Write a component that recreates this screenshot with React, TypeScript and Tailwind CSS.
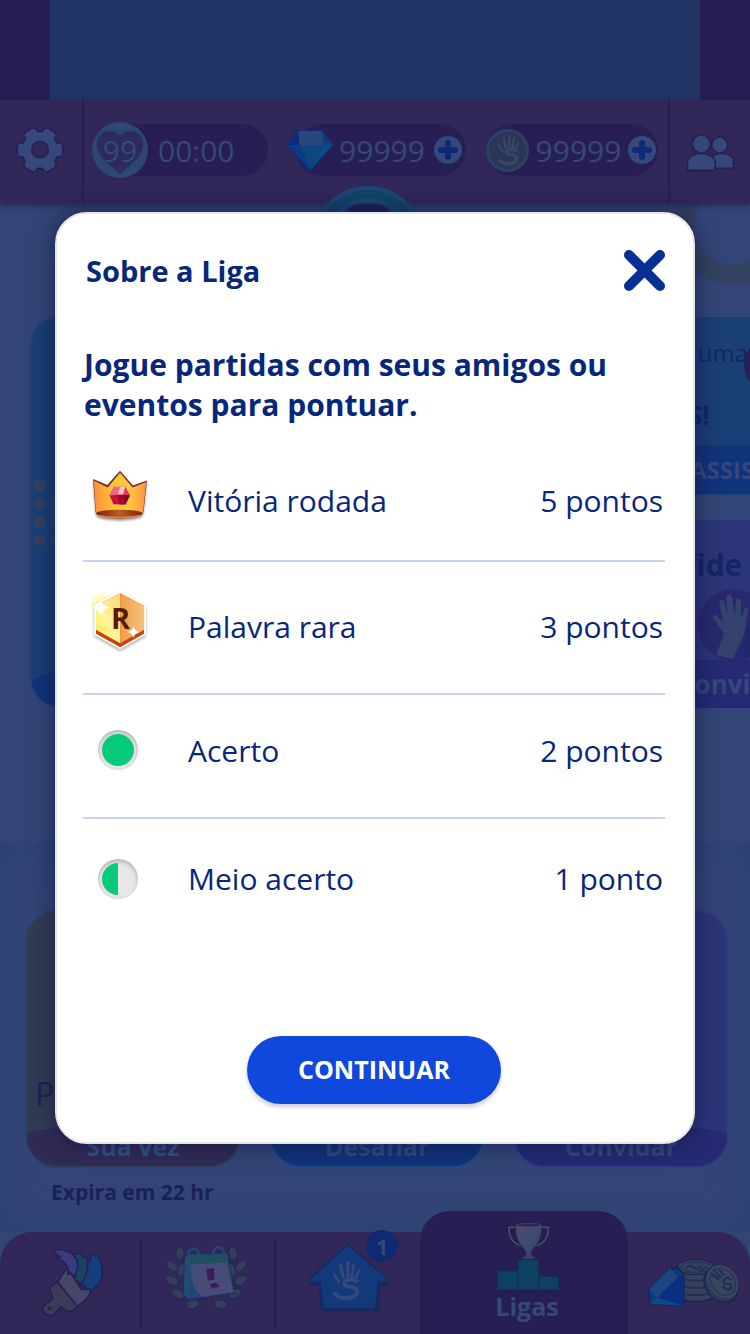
import type { ReactNode } from "react";

const HandMark = ({ className }: { className?: string }) => (
  <svg viewBox="0 0 90 126" className={className} fill="none" stroke="currentColor" strokeLinecap="round">
    <path d="M7 42 L24 66" strokeWidth="9" />
    <path d="M28 11 L36 52" strokeWidth="10" />
    <path d="M51 5 L51 48" strokeWidth="10" />
    <path d="M70 11 L63 49" strokeWidth="9" />
    <path d="M87 29 L74 55" strokeWidth="8" />
    <path d="M79 64 C61 52 36 60 40 74 C44 84 80 78 80 95 C80 117 34 127 10 103" strokeWidth="13" />
  </svg>
);

const GearShape = () => (
  <>
    <circle cx="120" cy="181" r="53" />
    <rect x="54" y="162" width="132" height="38" rx="10" />
    <rect x="54" y="162" width="132" height="38" rx="10" transform="rotate(60 120 181)" />
    <rect x="54" y="162" width="132" height="38" rx="10" transform="rotate(120 120 181)" />
  </>
);

const GearIcon = () => (
  <svg viewBox="45 106 150 150" className="size-[50px]">
    <g fill="#271f54" stroke="#271f54" strokeWidth="10">
      <GearShape />
    </g>
    <g fill="#34487c">
      <GearShape />
    </g>
    <circle cx="120" cy="180" r="24" fill="#312759" stroke="#271f54" strokeWidth="6" />
  </svg>
);

const FriendsIcon = () => (
  <svg viewBox="933 126 147 117" className="h-[39px] w-[49px]" fill="#34487c" stroke="#271f54" strokeWidth="5">
    <circle cx="1034" cy="162" r="24" />
    <path d="M1005 232 V210 C1005 180 1076 180 1076 210 V224 Q1076 232 1068 232 Z" />
    <circle cx="979" cy="159" r="27" />
    <path d="M937 238 V216 C937 178 1021 178 1021 216 V230 Q1021 238 1013 238 Z" />
  </svg>
);

const DiamondIcon = () => (
  <svg viewBox="860 116 144 130" className="h-[43px] w-[48px] shrink-0">
    <path d="M892 120 H970 L1002 164 L932 245 L860 164 Z" fill="#0b2d78" />
    <path d="M896 122 H968 L975 164 H900 Z" fill="#28467f" />
    <path d="M968 122 L1000 164 H975 Z" fill="#0d3f80" />
    <path d="M900 164 H975 L932 240 Z" fill="#10467f" />
    <path d="M975 164 H1000 L932 242 Z" fill="#0b4d84" />
    <path d="M862 164 H900 L932 240 Z" fill="#0a3b86" />
  </svg>
);

const PlusButton = ({ label }: { label: string }) => (
  <button type="button" aria-label={label} className="size-7 shrink-0 rounded-full bg-[#34487c]">
    <svg viewBox="0 0 28 28" stroke="#0d2a78" strokeWidth="6" strokeLinecap="round">
      <path d="M14 7 V21 M7 14 H21" />
    </svg>
  </button>
);

const HeartBadge = () => (
  <div className="relative flex size-14 shrink-0 items-center justify-center rounded-full bg-[#2e4675]">
    <svg viewBox="0 0 56 56" className="absolute inset-0">
      <path
        d="M28 14 C23 7 5 6 5 23 C6 38 20 43 28 52 C36 43 50 38 51 23 C51 6 33 7 28 14 Z"
        fill="#2d2a5c"
        stroke="#263766"
        strokeWidth="1"
      />
    </svg>
    <span className="relative">99</span>
  </div>
);

const CoinIcon = () => (
  <div className="flex size-[43px] shrink-0 items-center justify-center rounded-full border-[3px] border-[#2d4161] bg-[#2b3558]">
    <HandMark className="h-[31px] w-6 text-[#384765]" />
  </div>
);

const TopBar = () => (
  <header className="relative z-10 flex h-[104px] bg-[#312759] text-[#34487c] shadow-[0_2px_6px_rgba(20,24,70,0.5)]">
    <button type="button" aria-label="Configurações" className="flex w-[84px] items-center justify-center border-r-2 border-[#271f54] pr-0.5 pb-1">
      <GearIcon />
    </button>
    <div className="flex flex-1 items-center justify-between pr-2.5 pb-1 pl-2 text-[30px]">
      <div className="flex h-[52px] w-44 items-center gap-2.5 rounded-full bg-[#271f54]">
        <HeartBadge />
        <span>00:00</span>
      </div>
      <div className="ml-2 flex h-[52px] w-[170px] items-center justify-between rounded-full bg-[#271f54] pr-1">
        <div className="-mr-1 -ml-2.5">
          <DiamondIcon />
        </div>
        <span>99999</span>
        <PlusButton label="Comprar diamantes" />
      </div>
      <div className="flex h-[52px] w-[172px] items-center justify-between rounded-full bg-[#271f54] pr-0.5">
        <CoinIcon />
        <span>99999</span>
        <PlusButton label="Comprar moedas" />
      </div>
    </div>
    <button type="button" aria-label="Amigos" className="flex w-[82px] items-center justify-center border-l-2 border-[#271f54]">
      <FriendsIcon />
    </button>
  </header>
);

const Dots = () => (
  <div className="grid w-[30px] grid-cols-2 gap-1.5">
    {[0, 1, 2, 3, 4, 5, 6, 7].map((n) => (
      <span key={n} className={n === 1 ? "invisible size-3" : "size-3 rounded-full bg-[#33415f]"} />
    ))}
  </div>
);

const HandPhoto = () => (
  <svg viewBox="0 0 72 72" className="size-[72px] shrink-0 rounded-full bg-[#27286f]">
    <path d="M46 72 L48 40 L60 18 L72 20 V66 Z" fill="#1f2a68" />
    <path
      d="M18 66 L26 45 L15 29 Q14 25 18 26 L25 33 L21 13 Q23 8 26 13 L30 27 L28 8 Q31 3 34 8 L37 27 L38 11 Q42 7 43 12 L43 29 L47 19 Q51 17 50 22 L46 46 L35 70 Z"
      fill="#34436e"
    />
  </svg>
);

const LeagueSection = () => (
  <section className="relative h-[638px] bg-[#334577]">
    <div className="absolute -top-[36px] -right-[40px] size-[116px] rounded-full border-[20px] border-[#334260]" />
    <div className="absolute -top-[18px] left-[312px] z-10 size-28 rounded-full border-4 border-[#1f457b] bg-[#104665] p-2">
      <div className="flex size-full justify-center rounded-full border-4 border-[#1f457b] bg-[#1f3c6d]">
        <div className="mt-0.5 h-8 w-12 rounded-t-2xl bg-[#1e2256]" />
      </div>
    </div>
    <div className="flex justify-between gap-6 overflow-hidden pt-[110px] pl-[29px]">
      <article className="flex h-[395px] w-[320px] flex-col overflow-hidden rounded-[32px] border-2 border-[#28457a] bg-[#193f76]">
        <div className="flex-1 pt-[164px] pl-[3px]">
          <Dots />
        </div>
        <div className="h-[46px] rounded-t-[50%] bg-[#10337a]" />
      </article>
      <div className="-mr-24 flex w-[300px] flex-col gap-6 pt-[3px] text-[#142666]">
        <article className="h-[179px] border-b-2 border-[#1f457b] bg-[#193f76]">
          <div className="flex h-32 items-start pt-5 pl-[142px]">
            <div className="flex w-[60px] flex-col gap-7">
              <span className="self-end text-2xl">uma</span>
              <span className="text-[26px] leading-9 font-bold">S!</span>
            </div>
            <span className="-ml-1 size-14 rounded-full bg-[#2b1f57]" />
          </div>
          <button type="button" className="h-[49px] w-full bg-[#10337a] pl-36 text-left text-2xl font-bold text-[#34487c]">
            ASSISTIR
          </button>
        </article>
        <article className="flex h-[190px] flex-col border-b-2 border-[#34408a] bg-[#2c3579]">
          <div className="flex h-[140px] flex-col overflow-hidden pt-[22px] pl-[76px]">
            <span className="text-[30px] font-bold">Convide</span>
            <div className="pt-0.5 pl-[76px]">
              <HandPhoto />
            </div>
          </div>
          <button type="button" className="h-12 w-full bg-[#252a73] pl-[132px] text-left text-[26px] font-bold text-[#34487c]">
            Convidar
          </button>
        </article>
      </div>
    </div>
  </section>
);

type MatchCardProps = { label: string; className: string; footer: string; children?: ReactNode };

const MatchCard = ({ label, className, footer, children }: MatchCardProps) => (
  <article className={`flex h-[258px] w-[216px] flex-col justify-end overflow-hidden rounded-[32px] border-2 ${className}`}>
    {children}
    <button type="button" className={`h-10 w-full rounded-t-[50%_8px] text-[25px] leading-8 font-bold ${footer}`}>
      {label}
    </button>
  </article>
);

const MatchSection = () => (
  <section className="h-[390px] bg-[#334577] pt-[68px] pr-[21px] pl-[25px] shadow-[inset_0_0_36px_#2c4074]">
    <div className="flex justify-between">
      <MatchCard label="Sua vez" className="border-[#30405f] bg-[#323b53]" footer="bg-[#302b55] text-[#34508a]">
        <span className="pb-2 pl-2 text-[32px] text-[#1a2259]">P</span>
      </MatchCard>
      <MatchCard label="Desafiar" className="border-[#1d4d85] bg-[#193f76]" footer="bg-[#10337a] text-[#34487c]" />
      <MatchCard label="Convidar" className="border-[#323c82] bg-[#2c3579]" footer="bg-[#252a73] text-[#34487c]" />
    </div>
    <p className="pt-2 pl-[26px] text-[21px] leading-8 font-bold text-[#1b2158]">Expira em 22 hr</p>
  </section>
);

const BrushIcon = () => (
  <svg viewBox="125 195 195 215" className="h-[72px] w-[65px]" stroke="#271f54" strokeWidth="5" strokeLinejoin="round">
    <path d="M276 238 Q272 218 288 217 Q306 218 310 250 Q318 284 302 304 L277 329 L248 306 Q266 275 268 238 Z" fill="#143f7e" />
    <path d="M220 214 Q230 222 236 214 Q248 210 254 224 Q268 222 268 248 Q266 285 246 306 L222 282 Q242 258 234 238 Q230 225 220 214 Z" fill="#19445f" />
    <path d="M166 204 Q192 200 214 210 Q240 222 238 256 L230 284 L210 268 Q210 246 188 236 Q174 230 172 224 L188 226 Q166 212 166 204 Z" fill="#3a3a7e" />
    <path d="M202 262 L212 268 L208 276 L218 274 L250 322 L276 322 Q280 334 264 350 L236 374 L178 300 Z" fill="#464668" />
    <path d="M178 300 L238 374 Q218 392 204 386 L188 374 L166 398 Q146 406 134 386 Q130 372 142 366 L164 350 L154 324 Q154 308 178 300 Z" fill="#3b3b56" />
    <circle cx="153" cy="379" r="4" fill="#271f54" strokeWidth="2" />
  </svg>
);

const leaves = [
  [540, 218, 5],
  [516, 256, -45],
  [516, 300, -60],
  [534, 340, -60],
  [578, 372, -100],
  [700, 218, -5],
  [724, 256, 45],
  [724, 300, 60],
  [706, 340, 60],
  [662, 372, 100],
  [546, 268, 20],
  [694, 268, -20],
];

const CalendarIcon = () => (
  <svg viewBox="495 190 250 205" className="h-[68px] w-[83px]" strokeLinejoin="round">
    <path d="M540 220 C515 310 530 350 605 380 M700 220 C725 310 710 350 635 380" fill="none" stroke="#23305a" strokeWidth="6" />
    {leaves.map(([x, y, angle]) => (
      <ellipse
        key={`${x}-${y}`}
        cx={x}
        cy={y}
        rx="13"
        ry="21"
        fill="#363d5a"
        stroke="#232a5a"
        strokeWidth="4"
        transform={`rotate(${angle} ${x} ${y})`}
      />
    ))}
    <path d="M553 236 Q555 222 568 222 L684 220 L704 338 L562 356 L550 340 Z" fill="#244b70" stroke="#232a5a" strokeWidth="3" />
    <path d="M568 222 L684 220 V246 L570 250 Z" fill="#20505f" />
    <path d="M572 252 L682 246 Q686 300 704 334 L612 350 Q572 332 572 252 Z" fill="#464b78" />
    <path d="M572 300 Q580 336 612 350 L562 356 Z" fill="#204578" />
    <path d="M570 232 A16 16 0 1 1 588 234 M644 226 A16 16 0 1 1 664 230" fill="none" stroke="#23477c" strokeWidth="7" />
    <path d="M619 265 L643 263 L644 298 L624 300 Z M630 312 L648 306 L660 318 L636 324 Z" fill="#3a1c51" />
  </svg>
);

const HouseIcon = () => (
  <div className="relative">
    <svg viewBox="920 182 246 216" className="h-[72px] w-[82px]" strokeLinejoin="round">
      <path d="M1042 194 L1158 294 V308 H1136 L1130 384 H966 L960 308 H930 V296 Z" fill="#17295d" stroke="#17295d" strokeWidth="12" />
      <path d="M1042 192 L1158 292 Q1158 300 1150 300 H1132 L1124 380 H970 L962 300 H932 V294 Z" fill="#123a7b" />
    </svg>
    <HandMark className="absolute top-[19px] left-6 h-10 w-[30px] text-[#34487c]" />
    <span className="absolute -top-3 left-[59px] flex size-8 items-center justify-center rounded-full bg-[#0f2a72] text-[22px] font-bold text-[#34487c]">
      1
    </span>
  </div>
);

const TrophyIcon = () => (
  <svg viewBox="362 125 195 212" className="h-[71px] w-[65px]">
    <defs>
      <linearGradient id="cup" x1="0" x2="1" y1="0" y2="1">
        <stop offset="0" stopColor="#504a68" />
        <stop offset="0.5" stopColor="#3c4c72" />
        <stop offset="1" stopColor="#3c3660" />
      </linearGradient>
    </defs>
    <path d="M426 143 H404 Q403 188 440 198 M500 143 H522 Q523 188 486 198" fill="none" stroke="#1e1a4a" strokeWidth="11" />
    <path d="M426 143 H404 Q403 188 440 198 M500 143 H522 Q523 188 486 198" fill="none" stroke="#4a4566" strokeWidth="6" />
    <path d="M423 136 H503 Q504 188 476 209 L471 224 L486 239 H440 L456 224 L450 209 Q422 188 423 136 Z" fill="url(#cup)" stroke="#1e1a4a" strokeWidth="2" />
    <ellipse cx="463" cy="137" rx="39" ry="5" fill="#30224f" stroke="#46506e" strokeWidth="2" />
    <path d="M369 274 H431 V240 H493 V291 H553 V331 H369 Z" fill="#0e405f" stroke="#142a59" strokeWidth="2" />
    <path d="M431 274 V331 M493 291 V331" stroke="#0d3057" strokeWidth="3" />
  </svg>
);

const GemsIcon = () => (
  <svg viewBox="815 230 290 150" className="h-[50px] w-[97px]" strokeLinejoin="round">
    <path d="M908 258 V342 A56 22 0 0 0 1020 342 V258 Z" fill="#37405c" stroke="#1d2554" strokeWidth="5" />
    <path d="M910 286 A56 20 0 0 0 1018 286 M910 308 A56 20 0 0 0 1018 308 M910 330 A56 20 0 0 0 1018 330" fill="none" stroke="#262b50" strokeWidth="5" />
    <ellipse cx="964" cy="260" rx="55" ry="23" fill="#35425e" stroke="#1d2554" strokeWidth="4" />
    <ellipse cx="964" cy="260" rx="43" ry="16" fill="none" stroke="#28345a" strokeWidth="4" />
    <path d="M934 264 Q946 250 958 262 Q968 272 978 256 M980 266 L998 260 M974 270 L990 272" fill="none" stroke="#1f2b56" strokeWidth="5" />
    <ellipse cx="1040" cy="312" rx="47" ry="58" transform="rotate(-38 1040 312)" fill="#2d3657" stroke="#1d2554" strokeWidth="5" />
    <ellipse cx="1045" cy="304" rx="43" ry="54" transform="rotate(-38 1045 304)" fill="#37455f" />
    <ellipse cx="1045" cy="304" rx="34" ry="44" transform="rotate(-38 1045 304)" fill="none" stroke="#26345a" strokeWidth="4" />
    <path
      d="M1012 282 L1034 298 M1020 272 L1040 292 M1034 266 L1048 286 M1072 298 Q1056 286 1048 300 Q1044 312 1058 310 Q1074 310 1070 324 Q1058 334 1044 318"
      fill="none"
      stroke="#202c57"
      strokeWidth="6"
    />
    <path d="M886 264 L912 264 L928 284 V376 L826 370 L822 328 Z" fill="#0d397e" stroke="#192555" strokeWidth="5" />
    <path d="M886 264 L912 290 L848 352 L822 328 Z" fill="#1d4580" />
    <path d="M912 290 L928 284 V376 L848 352 Z" fill="#092f83" />
    <path d="M848 352 L928 376 L826 370 Z" fill="#0d4a87" />
  </svg>
);

const BottomNav = () => (
  <nav className="relative grid h-[102px] grid-cols-[142fr_134fr_144fr_208fr_122fr] rounded-t-[32px] bg-[#312759] text-[#34487c]">
    <button type="button" aria-label="Personalizar" className="my-1.5 flex items-center justify-center border-r-2 border-[#271f54] pl-1">
      <BrushIcon />
    </button>
    <button type="button" aria-label="Eventos" className="my-1.5 flex items-start justify-center border-r-2 border-[#271f54] pt-1.5 pr-1">
      <CalendarIcon />
    </button>
    <button type="button" aria-label="Início" className="flex items-start justify-center pt-2.5">
      <HouseIcon />
    </button>
    <button type="button" className="-mt-[21px] flex flex-col items-center rounded-t-[30px] bg-[#271f54] pt-2.5 pl-1.5 text-[25px] leading-7 font-bold">
      <TrophyIcon />
      Ligas
    </button>
    <button type="button" aria-label="Loja" className="flex justify-center pt-[25px] pl-2.5">
      <GemsIcon />
    </button>
  </nav>
);

const CrownIcon = () => (
  <svg viewBox="93 50 180 202" className="h-[67px] w-[60px] drop-shadow-[0_2px_1px_rgba(0,0,0,0.4)]" strokeLinejoin="round">
    <defs>
      <linearGradient id="crown" x1="0" x2="1">
        <stop offset="0" stopColor="#ff8a3c" />
        <stop offset="0.22" stopColor="#fdae38" />
        <stop offset="0.4" stopColor="#fdc43a" />
        <stop offset="0.7" stopColor="#fdc73b" />
        <stop offset="1" stopColor="#ff8f42" />
      </linearGradient>
      <linearGradient id="crownBase" x1="0" x2="1">
        <stop offset="0" stopColor="#6d2713" />
        <stop offset="0.5" stopColor="#b85c22" />
        <stop offset="1" stopColor="#74290f" />
      </linearGradient>
    </defs>
    <path d="M99 86 L142 104 L180 61 L219 106 L261 91 L251 184 Q248 204 178 205 Q110 203 106 184 Z" fill="#6e2d22" />
    <path d="M101 91 L143 112 L180 67 L218 112 L259 95 L250 184 Q246 203 178 203 Q112 202 107 184 Z" fill="url(#crown)" />
    <ellipse cx="178" cy="190" rx="70" ry="11" fill="url(#crownBase)" />
    <path d="M110 194 Q178 206 246 194 Q236 204 178 205 Q120 204 110 194 Z" fill="#f2793a" />
    <path d="M147 136 L161 109 H196 L211 136 L197 164 H160 Z" fill="#c9103c" stroke="#ffd56a" strokeWidth="2" />
    <path d="M161 110 H180 L172 134 L148 136 Z" fill="#f0667e" />
    <path d="M180 110 H196 L190 134 L172 134 Z" fill="#ffc2c8" />
    <path d="M196 110 L210 136 L190 134 Z" fill="#e83a58" />
    <path d="M172 134 H190 L197 163 H178 Z" fill="#a30a32" />
    <path d="M190 134 L210 136 L197 163 Z" fill="#840726" />
  </svg>
);

const RareWordIcon = () => (
  <svg viewBox="92 420 190 225" className="h-[75px] w-[63px]" strokeLinejoin="round">
    <defs>
      <linearGradient id="tileLeft" x1="0" x2="1" y1="1" y2="0">
        <stop offset="0" stopColor="#ffe94f" />
        <stop offset="0.45" stopColor="#fff59a" />
        <stop offset="1" stopColor="#fbd676" />
      </linearGradient>
      <linearGradient id="tileRight" x1="0" x2="1">
        <stop offset="0" stopColor="#eea04a" />
        <stop offset="1" stopColor="#f6c277" />
      </linearGradient>
      <radialGradient id="glow">
        <stop offset="0" stopColor="#ffef7a" />
        <stop offset="1" stopColor="#ffef7a" stopOpacity="0" />
      </radialGradient>
    </defs>
    <circle cx="124" cy="466" r="42" fill="url(#glow)" />
    <path
      d="M180 432 L252 470 V554 L180 595 L107 554 V470 Z"
      fill="#c8440f"
      stroke="#ffffff"
      strokeWidth="11"
      className="drop-shadow-[0_5px_5px_rgba(0,0,0,0.35)]"
    />
    <path d="M180 432 L252 470 V554 L180 595 L107 554 V470 Z" fill="#c8440f" />
    <path d="M180 432 V583 L107 542 V470 Z" fill="url(#tileLeft)" />
    <path d="M180 432 L252 470 V542 L180 583 Z" fill="url(#tileRight)" />
    <text x="181" y="540" textAnchor="middle" fontSize="87" fontWeight="700" fill="#5a1a05">
      R
    </text>
    <path d="M121 447 Q125 470 147 475 Q125 480 121 503 Q117 480 95 475 Q117 470 121 447 Z" fill="#ffffff" />
    <path d="M220 530 Q223 546 238 549 Q223 552 220 567 Q217 552 203 549 Q217 546 220 530 Z" fill="#ffffff" />
  </svg>
);

const Peg = ({ half }: { half?: boolean }) => (
  <div className="ml-[7px] size-10 rounded-full bg-[#e7e7e7] p-1 shadow-[inset_0_2px_4px_rgba(0,0,0,0.25)]">
    <div className={half ? "h-8 w-4 rounded-l-full bg-[#07ca7b]" : "size-8 rounded-full bg-[#07ca7b]"} />
  </div>
);

const scores = [
  { name: "Vitória rodada", points: "5 pontos", icon: <CrownIcon />, row: "h-[120px] border-b-2" },
  { name: "Palavra rara", points: "3 pontos", icon: <RareWordIcon />, row: "h-[133px] border-b-2 *:pb-0.5" },
  { name: "Acerto", points: "2 pontos", icon: <Peg />, row: "h-[124px] border-b-2 *:pb-3" },
  { name: "Meio acerto", points: "1 ponto", icon: <Peg half />, row: "h-[122px] *:pb-0.5" },
];

const LeagueDialog = () => (
  <div className="absolute inset-0 z-20 flex items-start px-[55px] pt-[212px]">
    <div
      role="dialog"
      aria-labelledby="dialog-title"
      className="flex w-full flex-col rounded-[32px] border-2 border-[#e6e6e6] bg-white pt-9 pr-7 pb-[38px] pl-[26px] text-[#06277a] shadow-[0_0_24px_rgba(10,16,48,0.6)]"
    >
      <div className="flex items-center justify-between pl-[3px]">
        <h2 id="dialog-title" className="text-[29px] leading-10 font-bold">
          Sobre a Liga
        </h2>
        <button type="button" aria-label="Fechar">
          <svg viewBox="0 0 41 41" className="size-[41px]" stroke="#062f96" strokeWidth="10" strokeLinecap="round">
            <path d="M5 5 L36 36 M36 5 L5 36" />
          </svg>
        </button>
      </div>
      <p className="mt-[54px] pl-px text-[30px] leading-10 font-bold">
        Jogue partidas com seus amigos ou eventos para pontuar.
      </p>
      <table className="mt-4 w-full text-[30px]">
        <tbody>
          {scores.map((score) => (
            <tr key={score.name} className={`border-[#c5d3f5] ${score.row}`}>
              <td className="w-[105px] pl-2">{score.icon}</td>
              <td>{score.name}</td>
              <td className="pr-0.5 text-right">{score.points}</td>
            </tr>
          ))}
        </tbody>
      </table>
      <button
        type="button"
        className="mt-24 h-[68px] w-[254px] self-center rounded-full bg-[#1048dd] text-[25px] font-bold text-white shadow-[0_3px_4px_rgba(0,0,0,0.2)]"
      >
        CONTINUAR
      </button>
    </div>
  </div>
);

const App = () => {
  return (
    <div className="relative min-h-screen overflow-hidden bg-[#334577] font-['Open_Sans','Noto_Sans',sans-serif]">
      <div className="h-[100px] bg-[#271f54] px-[50px]">
        <div className="h-full bg-[#203566]" />
      </div>
      <TopBar />
      <LeagueSection />
      <MatchSection />
      <BottomNav />
      <LeagueDialog />
    </div>
  );
};

export default App;
